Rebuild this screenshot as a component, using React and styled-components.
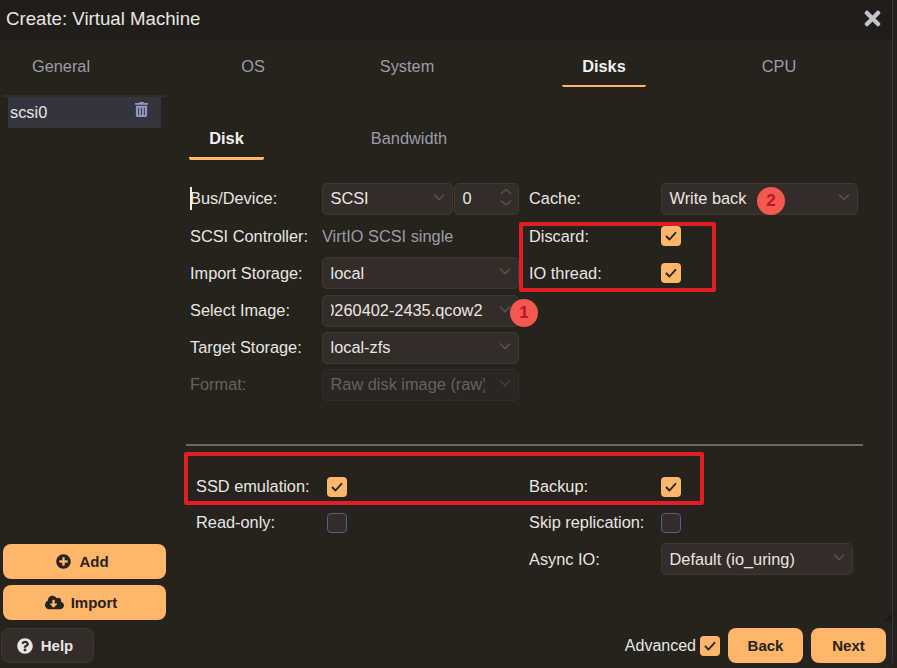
import React from 'react';
import styled, { createGlobalStyle } from 'styled-components';
import { FaPlusCircle, FaCloudDownloadAlt, FaQuestionCircle, FaTrashAlt, FaTimes } from 'react-icons/fa';

const GlobalStyle = createGlobalStyle`
  html, body {
    margin: 0;
    padding: 0;
    background: #24211c;
  }
  * {
    box-sizing: border-box;
  }
`;

const Window = styled.div`
  position: relative;
  width: 893px;
  height: 668px;
  overflow: hidden;
  display: flex;
  flex-direction: column;
  background: #26221c;
  border-right: 1px solid #3a3a42;
  border-bottom-right-radius: 8px;
  color: #e8e6e3;
  font-family: 'Liberation Sans', Arial, sans-serif;
  font-size: 16.35px;
`;

const Header = styled.header`
  height: 40px;
  flex: none;
  display: flex;
  align-items: center;
  justify-content: space-between;
  padding: 0 8px 2px 6px;
  background: #211e19;
  font-size: 18.65px;
`;

const Close = styled.span`
  display: flex;
  margin-top: -2px;
  color: #c4c4c8;
  font-size: 23px;
`;

const TabBar = styled.nav`
  height: 48px;
  flex: none;
  display: flex;
  align-items: flex-start;
  padding-left: 19px;
`;

const Tab = styled.div`
  width: 84px;
  height: 47px;
  margin-left: ${(p) => p.$gap || 0}px;
  padding-top: 7px;
  display: flex;
  align-items: center;
  justify-content: center;
  color: ${(p) => (p.$active ? '#f2f0ed' : '#9c9ca8')};
  font-weight: ${(p) => (p.$active ? 700 : 400)};
  border-bottom: 2px solid ${(p) => (p.$active ? '#ffb66b' : 'transparent')};
  border-radius: 0 0 2px 2px;
`;

const Body = styled.div`
  flex: 1;
  min-height: 0;
  display: flex;
`;

const Sidebar = styled.aside`
  width: 186px;
  flex: none;
  display: flex;
  flex-direction: column;
  padding: 7px 20px 0 3px;
`;

const DiskList = styled.div`
  flex: 1;
  border-top: 2px solid #322d27;
  padding: 0 5px;
`;

const DiskRow = styled.div`
  height: 31px;
  display: flex;
  justify-content: space-between;
  padding: 6px 12px 0 2px;
  background: #34343e;
  border-bottom: 1px solid #3b3640;
  color: #e8e6e3;
`;

const Trash = styled.span`
  color: #9198bd;
  font-size: 15px;
  margin-top: -1px;
`;

const SideButtons = styled.div`
  display: flex;
  flex-direction: column;
  gap: 6px;
`;

const Button = styled.button`
  height: 35px;
  width: ${(p) => p.$width || 'auto'};
  display: flex;
  align-items: center;
  justify-content: center;
  gap: ${(p) => p.$gap || 0}px;
  border: 0;
  border-radius: 8px;
  background: #ffb66b;
  color: #26221c;
  font-family: inherit;
  font-size: 15px;
  font-weight: 700;
  padding: 0 ${(p) => p.$shift || 0}px 0 0;

  svg {
    width: ${(p) => p.$icon || 15}px;
    height: ${(p) => p.$icon || 15}px;
  }
`;

const HelpButton = styled(Button)`
  background: #332c28;
  border: 1px solid #3f3833;
  color: #e8e6e3;
`;

const Content = styled.main`
  flex: 1;
  min-width: 0;
  padding: 0 29px 0 0;
`;

const SubTabs = styled.div`
  height: 72px;
  padding-top: 32px;
  display: flex;
`;

const SubTab = styled.div`
  width: 75px;
  height: 40px;
  margin-left: 3px;
  display: flex;
  align-items: center;
  justify-content: center;
  color: ${(p) => (p.$active ? '#f2f0ed' : '#9c9ca8')};
  font-weight: ${(p) => (p.$active ? 700 : 400)};
  border-bottom: 3px solid ${(p) => (p.$active ? '#ffb66b' : 'transparent')};
  border-radius: 0 0 2px 2px;
`;

const IdleSubTab = styled(SubTab)`
  width: 290px;
  margin-left: 0;
`;

const Columns = styled.div`
  display: grid;
  grid-template-columns: 339px 1fr;
  padding: 20.4px 0 0 4px;
`;

const Column = styled.div`
  display: flex;
  flex-direction: column;
`;

const Row = styled.div`
  height: ${(p) => p.$h || 37.2}px;
  display: flex;
  align-items: center;
  color: ${(p) => (p.$muted ? '#66635f' : '#e8e6e3')};
`;

const Label = styled.label`
  width: ${(p) => p.$w || 132}px;
  flex: none;
`;

const Value = styled.span`
  color: #9c9ca8;
`;

const Field = styled.div`
  position: relative;
  width: ${(p) => p.$width || 197}px;
  height: 32px;
  flex: none;
  margin-right: ${(p) => p.$gap || 0}px;
  display: flex;
  align-items: center;
  padding-left: 7.5px;
  background: ${(p) => (p.$disabled ? '#2a2622' : '#332c28')};
  border: 1px solid ${(p) => (p.$disabled ? '#332e29' : '#3f3833')};
  border-radius: 5px;
  color: ${(p) => (p.$disabled ? '#66635f' : '#e8e6e3')};
  white-space: nowrap;
  overflow: hidden;
`;

const FieldText = styled.span`
  width: ${(p) => (p.$clipStart ? 152 : 154)}px;
  display: flex;
  justify-content: ${(p) => (p.$clipStart ? 'flex-end' : 'flex-start')};
  overflow: hidden;
  flex: none;
`;

const FieldInner = styled.span`
  flex: none;
`;

const Arrow = styled.svg`
  position: absolute;
  right: 6px;
  top: 6px;
  width: 14px;
  height: 14px;
  fill: none;
  stroke: ${(p) => (p.$dim ? '#423d37' : '#575149')};
  stroke-width: 1.6;
`;

const Chevron = ({ dim }) => (
  <Arrow viewBox="0 0 14 14" $dim={dim}>
    <path d="M2 4.5 L7 9.5 L12 4.5" />
  </Arrow>
);

const Spinner = styled.svg`
  position: absolute;
  right: 4px;
  top: 3px;
  width: 16px;
  height: 22px;
  fill: none;
  stroke: #575149;
  stroke-width: 1.6;
`;

const Caret = styled.span`
  position: absolute;
  left: 190px;
  top: 187px;
  width: 2px;
  height: 23px;
  background: #f2f0ed;
`;

const Check = styled.span`
  width: 20px;
  height: 20px;
  flex: none;
  display: flex;
  align-items: center;
  justify-content: center;
  border-radius: 4px;
  background: ${(p) => (p.$on ? '#ffb66b' : '#332c28')};
  border: ${(p) => (p.$on ? '0' : '1px solid #53608f')};
`;

const CheckMark = styled.svg`
  width: 20px;
  height: 20px;
  fill: none;
  stroke: #26221c;
  stroke-width: 1.8;
  stroke-linecap: round;
  stroke-linejoin: round;
`;

const Divider = styled.hr`
  margin: 40.4px 0 0;
  border: 0;
  height: 2px;
  background: #6b6865;
`;

const BottomColumns = styled(Columns)`
  padding: 22.5px 0 0 10px;
  grid-template-columns: 333px 1fr;
`;

const Footer = styled.footer`
  height: 48px;
  flex: none;
  display: flex;
  justify-content: space-between;
  padding: 8px 6px 5px 1px;
`;

const FooterRight = styled.div`
  display: flex;
  align-items: center;
  gap: 8px;
`;

const Advanced = styled.span`
  display: flex;
  align-items: center;
  gap: 4px;
  font-size: 16px;
`;

const AdvancedLabel = styled.span`
  padding-top: 1px;
`;

const Mark = styled.span`
  position: absolute;
  border: 4px solid #e11d26;
  border-radius: 2px;
  left: ${(p) => p.$x}px;
  top: ${(p) => p.$y}px;
  width: ${(p) => p.$w}px;
  height: ${(p) => p.$h}px;
`;

const Badge = styled.span`
  position: absolute;
  left: ${(p) => p.$x}px;
  top: ${(p) => p.$y}px;
  width: 28px;
  height: 28px;
  border-radius: 50%;
  background: #f4584f;
  color: #b3172c;
  font-weight: 700;
  font-size: 17px;
  display: flex;
  align-items: center;
  justify-content: center;
`;

const Notch = styled.span`
  position: absolute;
  left: 884px;
  top: 613px;
  width: 8px;
  height: 8px;
  background: linear-gradient(135deg, transparent 50%, #1e1b17 50%);
`;

const tick = (on) => (
  <Check $on={on}>
    {on && (
      <CheckMark viewBox="0 0 20 20">
        <path d="M5.5 10.5 L8.5 13.5 L14.5 6.8" />
      </CheckMark>
    )}
  </Check>
);

export default function App() {
  return (
    <Window>
      <GlobalStyle />
      <Header>
        Create: Virtual Machine
        <Close><FaTimes /></Close>
      </Header>
      <TabBar>
        <Tab>General</Tab>
        <Tab $gap={108}>OS</Tab>
        <Tab $gap={70}>System</Tab>
        <Tab $gap={113} $active>Disks</Tab>
        <Tab $gap={91}>CPU</Tab>
      </TabBar>
      <Body>
        <Sidebar>
          <DiskList>
            <DiskRow>
              scsi0
              <Trash><FaTrashAlt /></Trash>
            </DiskRow>
          </DiskList>
          <SideButtons>
            <Button $gap={8} $shift={4}><FaPlusCircle /> Add</Button>
            <Button $gap={7} $shift={7} $icon={19}><FaCloudDownloadAlt /> Import</Button>
          </SideButtons>
        </Sidebar>
        <Content>
          <SubTabs>
            <SubTab $active>Disk</SubTab>
            <IdleSubTab>Bandwidth</IdleSubTab>
          </SubTabs>
          <Columns>
            <Column>
              <Row>
                <Label>Bus/Device:</Label>
                <Field $width={131} $gap={1}>SCSI<Chevron /></Field>
                <Field $width={65}>0
                  <Spinner viewBox="0 0 16 22"><path d="M3 7 L8 2.5 L13 7 M3 13.5 L8 18 L13 13.5" /></Spinner>
                </Field>
              </Row>
              <Row>
                <Label>SCSI Controller:</Label>
                <Value>VirtIO SCSI single</Value>
              </Row>
              <Row>
                <Label>Import Storage:</Label>
                <Field>local<Chevron /></Field>
              </Row>
              <Row>
                <Label>Select Image:</Label>
                <Field><FieldText $clipStart><FieldInner>0260402-2435.qcow2</FieldInner></FieldText><Chevron /></Field>
              </Row>
              <Row>
                <Label>Target Storage:</Label>
                <Field>local-zfs<Chevron /></Field>
              </Row>
              <Row $muted>
                <Label>Format:</Label>
                <Field $disabled><FieldText><FieldInner>Raw disk image (raw)</FieldInner></FieldText><Chevron dim /></Field>
              </Row>
            </Column>
            <Column>
              <Row>
                <Label>Cache:</Label>
                <Field>Write back<Chevron /></Field>
              </Row>
              <Row>
                <Label>Discard:</Label>
                {tick(true)}
              </Row>
              <Row>
                <Label>IO thread:</Label>
                {tick(true)}
              </Row>
            </Column>
          </Columns>
          <Divider />
          <BottomColumns>
            <Column>
              <Row $h={36.3}>
                <Label $w={131}>SSD emulation:</Label>
                {tick(true)}
              </Row>
              <Row $h={36.3}>
                <Label $w={131}>Read-only:</Label>
                {tick(false)}
              </Row>
            </Column>
            <Column>
              <Row $h={36.3}>
                <Label>Backup:</Label>
                {tick(true)}
              </Row>
              <Row $h={36.3}>
                <Label>Skip replication:</Label>
                {tick(false)}
              </Row>
              <Row $h={36.3}>
                <Label>Async IO:</Label>
                <Field $width={192}>Default (io_uring)<Chevron /></Field>
              </Row>
            </Column>
          </BottomColumns>
        </Content>
      </Body>
      <Footer>
        <HelpButton $width="93px" $gap={8} $shift={5} $icon={16}><FaQuestionCircle /> Help</HelpButton>
        <FooterRight>
          <Advanced><AdvancedLabel>Advanced</AdvancedLabel> {tick(true)}</Advanced>
          <Button $width="75px">Back</Button>
          <Button $width="75px">Next</Button>
        </FooterRight>
      </Footer>
      <Caret />
      <Notch />
      <Mark $x={519} $y={222} $w={197} $h={70} />
      <Mark $x={184} $y={452} $w={520} $h={53} />
      <Badge $x={510} $y={299}>1</Badge>
      <Badge $x={757} $y={187}>2</Badge>
    </Window>
  );
}
